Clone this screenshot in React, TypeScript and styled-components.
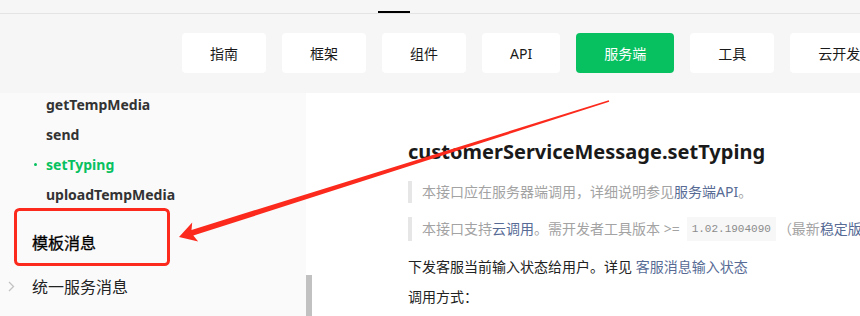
import React from 'react'
import styled, { createGlobalStyle } from 'styled-components'

const GlobalStyle = createGlobalStyle`
  html, body {
    margin: 0;
    padding: 0;
    background: #fff;
  }
  body {
    font-family: "Noto Sans", "Noto Sans CJK SC", sans-serif;
  }
`

const Page = styled.div`
  position: relative;
  width: 860px;
  height: 316px;
  overflow: hidden;
  display: flex;
  flex-direction: column;
`

const TopStrip = styled.div`
  height: 13px;
  border-bottom: 1px solid #e4e4e4;
  background: #f6f6f6;
  display: flex;
  align-items: flex-end;
  padding-left: 378px;
`

const ActiveMark = styled.div`
  width: 32px;
  height: 2px;
  background: #000;
`

const NavBar = styled.nav`
  height: 79px;
  box-sizing: border-box;
  padding: 19px 0 0 182px;
  display: flex;
  gap: 16px;
  background: #f6f6f6;
`

const NavButton = styled.div<{ $active?: boolean }>`
  height: 40px;
  padding: 0 28px;
  border-radius: 4px;
  display: flex;
  align-items: center;
  justify-content: center;
  flex-shrink: 0;
  font-size: 14px;
  background: ${p => (p.$active ? '#07c160' : '#fff')};
  color: ${p => (p.$active ? '#fff' : '#1a1a1a')};
`

const Main = styled.div`
  flex: 1;
  display: flex;
  min-height: 0;
`

const Sidebar = styled.aside`
  width: 306px;
  flex-shrink: 0;
  background: #fafafa;
  overflow: hidden;
`

const SubList = styled.ul`
  list-style: none;
  margin: -4px 0 11px;
  padding: 0;
`

const SubItem = styled.li<{ $active?: boolean }>`
  height: 30px;
  display: flex;
  align-items: center;
  padding-left: 34px;
  font-size: 14px;
  font-weight: 700;
  color: ${p => (p.$active ? '#07c160' : '#333')};
`

const BulletSlot = styled.span`
  width: 12px;
  display: flex;
  align-items: center;
`

const Bullet = styled.span`
  width: 3px;
  height: 3px;
  border-radius: 50%;
  background: #07c160;
`

const GroupItem = styled.div<{ $strong?: boolean }>`
  height: 44px;
  display: flex;
  align-items: center;
  padding-left: 8px;
  font-size: 16px;
  font-weight: 400;
  color: ${p => (p.$strong ? '#000' : '#222')};
  -webkit-text-stroke: ${p => (p.$strong ? '0.3px #000' : '0')};
`

const ChevronSlot = styled.span`
  width: 24px;
  display: flex;
  align-items: center;
`

const ScrollTrack = styled.div`
  width: 6px;
  flex-shrink: 0;
  display: flex;
  flex-direction: column;
`

const ScrollThumb = styled.div`
  margin-top: 182px;
  height: 60px;
  background: #c1c1c1;
`

const Content = styled.main`
  flex: 1;
  min-width: 0;
  padding: 45px 0 0 96px;
  white-space: nowrap;
  overflow: hidden;
`

const Title = styled.h1`
  margin: 0;
  font-size: 20px;
  line-height: 28px;
  font-weight: 700;
  color: #1a1a1a;
`

const Quote = styled.blockquote<{ $gap: number }>`
  margin: ${p => p.$gap}px 0 0;
  padding-left: 10px;
  border-left: 4px solid #e6e6e6;
  font-size: 14px;
  line-height: 22px;
  color: #a3a3a3;
  display: flex;
  align-items: center;
`

const Link = styled.span`
  color: #576b95;
`

const Code = styled.code`
  display: inline-block;
  margin: 0 2px 0 7px;
  padding: 0 5px;
  line-height: 24px;
  font-family: "Liberation Mono", "DejaVu Sans Mono", monospace;
  font-size: 11px;
  color: #8c8c8c;
  background: #f7f7f7;
`

const Para = styled.p<{ $gap: number }>`
  margin: ${p => p.$gap}px 0 0;
  font-size: 14px;
  line-height: 22px;
  color: #222;
`

const Overlay = styled.svg`
  position: absolute;
  left: 0;
  top: 0;
  pointer-events: none;
`

const navItems = ['指南', '框架', '组件', 'API', '服务端', '工具', '云开发']
const subItems = ['getTempMedia', 'send', 'setTyping', 'uploadTempMedia']

const arrowPoints = [
  [179, 237],
  [198.2, 241.4],
  [193.3, 235.6],
  [609.2, 101.8],
  [608.8, 100.2],
  [191.5, 229.9],
  [192.2, 222.4],
]
  .map(p => p.join(','))
  .join(' ')

export default function App() {
  return (
    <Page>
      <GlobalStyle />
      <TopStrip>
        <ActiveMark />
      </TopStrip>
      <NavBar>
        {navItems.map(item => (
          <NavButton key={item} $active={item === '服务端'}>
            {item}
          </NavButton>
        ))}
      </NavBar>
      <Main>
        <Sidebar>
          <SubList>
            {subItems.map(item => (
              <SubItem key={item} $active={item === 'setTyping'}>
                <BulletSlot>{item === 'setTyping' && <Bullet />}</BulletSlot>
                {item}
              </SubItem>
            ))}
          </SubList>
          <GroupItem $strong>
            <ChevronSlot />
            模板消息
          </GroupItem>
          <GroupItem>
            <ChevronSlot>
              <svg width="7" height="11" viewBox="0 0 7 11">
                <polyline points="1,1 5.5,5.5 1,10" fill="none" stroke="#c2c2c2" strokeWidth="1.3" />
              </svg>
            </ChevronSlot>
            统一服务消息
          </GroupItem>
        </Sidebar>
        <ScrollTrack>
          <ScrollThumb />
        </ScrollTrack>
        <Content>
          <Title>customerServiceMessage.setTyping</Title>
          <Quote $gap={15}>
            本接口应在服务器端调用，详细说明参见<Link>服务端API</Link>。
          </Quote>
          <Quote $gap={14}>
            本接口支持<Link>云调用</Link>。需开发者工具版本 &gt;=
            <Code>1.02.1904090</Code>
            （最新<Link>稳定版下载</Link>），wx-server-sdk &gt;= 0.4.0
          </Quote>
          <Para $gap={15}>
            下发客服当前输入状态给用户。详见 <Link>客服消息输入状态</Link>
          </Para>
          <Para $gap={8}>调用方式：</Para>
        </Content>
      </Main>
      <Overlay width="860" height="316" viewBox="0 0 860 316">
        <rect x="15.5" y="209.5" width="153" height="55" rx="4" fill="none" stroke="#fb2a1d" strokeWidth="3" />
        <polygon points={arrowPoints} fill="#fb2a1d" />
      </Overlay>
    </Page>
  )
}
